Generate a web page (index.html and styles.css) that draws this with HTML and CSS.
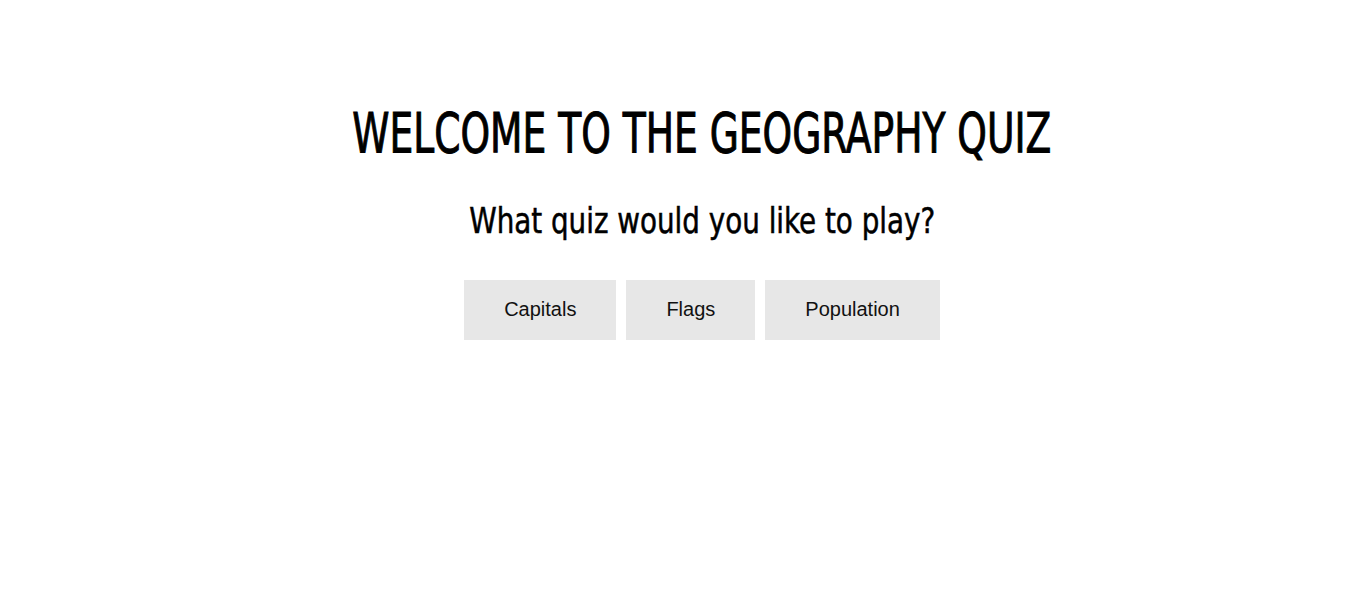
FILE: index.html
```html
<!DOCTYPE html>
<html>
<head>
<meta charset="utf-8">
<link rel="stylesheet" href="styles.css">
</head>
<body>
<main class="page">
  <h1 class="title">WELCOME TO THE GEOGRAPHY QUIZ</h1>
  <h2 class="subtitle">What quiz would you like to play?</h2>
  <div class="choices">
    <button class="choice">Capitals</button>
    <button class="choice">Flags</button>
    <button class="choice">Population</button>
  </div>
</main>
</body>
</html>
```
FILE: styles.css
```css
html, body {
  margin: 0;
  padding: 0;
  background: #ffffff;
}
.page {
  padding: 101px 0 0 41px;
  display: flex;
  flex-direction: column;
  align-items: center;
  color: #000;
}
.title {
  margin: 0;
  font-family: "DejaVu Sans Condensed", "DejaVu Sans", sans-serif;
  font-weight: normal;
  font-size: 55px;
  line-height: 64px;
  letter-spacing: 0;
  transform: scaleX(0.76);
  -webkit-text-stroke: 1px #000;
}
.subtitle {
  margin: 35px 0 0;
  font-family: "DejaVu Sans Condensed", "DejaVu Sans", sans-serif;
  font-weight: normal;
  font-size: 35px;
  line-height: 42px;
  letter-spacing: 0;
  transform: scaleX(0.882);
  -webkit-text-stroke: 0.5px #000;
}
.choices {
  display: flex;
  gap: 10px;
  margin-top: 38px;
}
.choice {
  height: 60px;
  padding: 0 40px 2px;
  border: none;
  background: #e7e7e7;
  font-family: "Liberation Sans", Arial, sans-serif;
  font-size: 20px;
  color: #111;
}
```
